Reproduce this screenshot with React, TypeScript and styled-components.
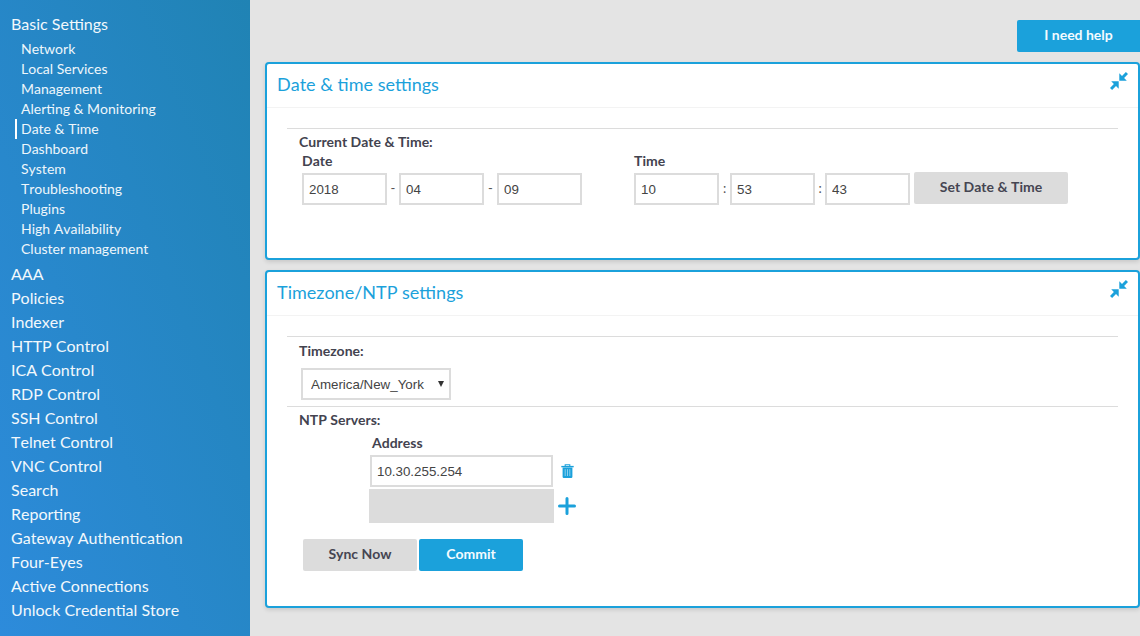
import React from "react";
import styled, { createGlobalStyle } from "styled-components";

const Global = createGlobalStyle`
  html, body { margin: 0; padding: 0; height: 100%; }
  body { font-family: Lato, "Open Sans", sans-serif; background: #e4e4e4; overflow: hidden; font-kerning: none; }
  * { box-sizing: border-box; }
`;

const Page = styled.div`
  display: flex;
  width: 1140px;
  height: 636px;
`;

const Sidebar = styled.nav`
  width: 250px;
  flex: none;
  padding-top: 12px;
  background: linear-gradient(to bottom left, #2083b4, #2d8bdb);
  color: #fff;
`;

const Head = styled.div`
  height: 24px;
  line-height: 24px;
  padding-left: 11px;
  font-size: 16px;
  color: #f2f8fc;
`;

const SubList = styled.div`
  margin: 3px 0 3px;
`;

const SubItem = styled.div<{ $active?: boolean }>`
  position: relative;
  height: 20px;
  line-height: 20px;
  margin-left: 15px;
  padding-left: ${(p) => (p.$active ? "4px" : "6px")};
  font-size: 14px;
  color: #eef6fb;
  border-left: ${(p) => (p.$active ? "2px solid #fff" : "none")};
`;

const Main = styled.main`
  flex: 1;
  padding: 20px 0 0 15px;
  display: flex;
  flex-direction: column;
`;

const TopBar = styled.div`
  display: flex;
  justify-content: flex-end;
  margin-bottom: 10px;
`;

const Button = styled.button<{ $w: number; $primary?: boolean }>`
  width: ${(p) => p.$w}px;
  height: 32px;
  flex: none;
  border: 0;
  border-radius: 2px;
  padding: 0 0 4px;
  font: 700 14px Lato, sans-serif;
  font-kerning: none;
  background: ${(p) => (p.$primary ? "#1ba1db" : "#dcdcdc")};
  color: ${(p) => (p.$primary ? "#f4fbff" : "#454552")};
`;

const HelpButton = styled(Button)`
  border-radius: 2px 0 0 2px;
`;

const Card = styled.section<{ $h: number }>`
  height: ${(p) => p.$h}px;
  margin-bottom: 10px;
  border: 2px solid #1ba1db;
  border-radius: 4px;
  background: #fff;
  box-shadow: 0 2px 4px rgba(0, 0, 0, 0.12);
`;

const CardHead = styled.header`
  height: 44px;
  display: flex;
  align-items: flex-start;
  justify-content: space-between;
  padding: 6px 10px 0;
  border-bottom: 1px solid #f3f3f3;
`;

const Title = styled.h2`
  margin: 0;
  height: 28px;
  line-height: 28px;
  font-size: 18px;
  font-weight: 400;
  color: #1ba1db;
`;

const CardBody = styled.div`
  padding: 20px 20px 0;
`;

const Rule = styled.hr`
  margin: 0;
  border: 0;
  border-top: 1px solid #dcdcdc;
`;

const Label = styled.div<{ $indent: number; $mb?: number; $mt?: number }>`
  height: 20px;
  line-height: 20px;
  padding-left: ${(p) => p.$indent}px;
  margin-top: ${(p) => p.$mt ?? 0}px;
  margin-bottom: ${(p) => p.$mb ?? 0}px;
  font-size: 14px;
  font-weight: 700;
  color: #43434f;
`;

const DateRow = styled.div`
  display: flex;
  padding-left: 15px;
  margin-top: -1px;
`;

const FieldGroup = styled.div<{ $w: number }>`
  width: ${(p) => p.$w}px;
  flex: none;
`;

const Fields = styled.div`
  display: flex;
  align-items: center;
`;

const Input = styled.input<{ $w: number }>`
  width: ${(p) => p.$w}px;
  height: 32px;
  flex: none;
  border: 2px solid #dcdcdc;
  border-radius: 0;
  background: #fff;
  padding: 0 5px;
  outline: none;
  font: 13.33px "Liberation Sans", Arial, sans-serif;
  color: #444;
`;

const Sep = styled.span<{ $w: number }>`
  width: ${(p) => p.$w}px;
  flex: none;
  text-align: center;
  font: 13px Lato, sans-serif;
  color: #555;
  position: relative;
  top: -1px;
`;

const SetButton = styled(Button)`
  align-self: flex-start;
  margin: -1px 0 0 4px;
`;

const SelectWrap = styled.div`
  position: relative;
  width: 150px;
  margin: 7px 0 6px 14px;
  &::after {
    content: "";
    position: absolute;
    right: 7px;
    top: 13px;
    border-left: 3px solid transparent;
    border-right: 3px solid transparent;
    border-top: 6px solid #333;
  }
`;

const Select = styled.select`
  display: block;
  width: 150px;
  height: 32px;
  appearance: none;
  border: 2px solid #dcdcdc;
  border-radius: 0;
  background: #fff;
  padding-left: 8px;
  outline: none;
  font: 13.33px "Liberation Sans", Arial, sans-serif;
  color: #444;
`;

const NtpRow = styled.div<{ $mt?: number }>`
  display: flex;
  align-items: center;
  margin-left: 82px;
  margin-top: ${(p) => p.$mt ?? 0}px;
`;

const AddressInput = styled(Input)`
  margin-left: 1px;
`;

const Blank = styled.div`
  width: 185px;
  height: 34px;
  flex: none;
  background: #dcdcdc;
`;

const TrashBtn = styled.span`
  display: flex;
  margin-left: 7.5px;
`;

const PlusBtn = styled.span`
  display: flex;
  margin-left: 3px;
`;

const Actions = styled.div`
  display: flex;
  gap: 2px;
  margin: 16px 0 0 16px;
`;

const IconWrap = styled.span`
  display: flex;
  margin-top: 2px;
`;

const CompressIcon = () => (
  <IconWrap>
    <svg width="18" height="18" viewBox="0 0 18 18" fill="#1ba1db">
      <path d="M9.3 1.2v7.5h7.5l-2.7-2.7L18 2.1 15.9 0 12 3.9z" />
      <path d="M8.7 16.8V9.3H1.2l2.7 2.7L0 15.9 2.1 18 6 14.1z" />
    </svg>
  </IconWrap>
);

const TrashIcon = () => (
  <svg width="13" height="14" viewBox="0 0 13 14" fill="none">
    <path d="M4.2 2.2V.7h4.6v1.5" stroke="#1ba1db" strokeWidth="1.1" />
    <path d="M.3 2.6h12.4" stroke="#1ba1db" strokeWidth="1.4" />
    <path d="M1.6 3.4h9.8v9.3a1.2 1.2 0 0 1-1.2 1.2H2.8a1.2 1.2 0 0 1-1.2-1.2z" fill="#1ba1db" />
    <path d="M4.2 5.2v6.8M6.5 5.2v6.8M8.8 5.2v6.8" stroke="#fff" strokeOpacity=".55" strokeWidth=".9" />
  </svg>
);

const PlusIcon = () => (
  <svg width="20" height="20" viewBox="0 0 20 20" fill="none">
    <path d="M10 2.5v15M2.5 10h15" stroke="#1ba1db" strokeWidth="3" strokeLinecap="round" />
  </svg>
);

const menu = ["AAA", "Policies", "Indexer", "HTTP Control", "ICA Control", "RDP Control", "SSH Control", "Telnet Control", "VNC Control", "Search", "Reporting", "Gateway Authentication", "Four-Eyes", "Active Connections", "Unlock Credential Store"];
const sub = ["Network", "Local Services", "Management", "Alerting & Monitoring", "Date & Time", "Dashboard", "System", "Troubleshooting", "Plugins", "High Availability", "Cluster management"];

export default function App() {
  return (
    <Page>
      <Global />
      <Sidebar>
        <Head>Basic Settings</Head>
        <SubList>
          {sub.map((s) => (
            <SubItem key={s} $active={s === "Date & Time"}>{s}</SubItem>
          ))}
        </SubList>
        {menu.map((m) => (
          <Head key={m}>{m}</Head>
        ))}
      </Sidebar>
      <Main>
        <TopBar>
          <HelpButton $w={123} $primary>I need help</HelpButton>
        </TopBar>
        <Card $h={198}>
          <CardHead>
            <Title>Date &amp; time settings</Title>
            <CompressIcon />
          </CardHead>
          <CardBody>
            <Rule />
            <Label $indent={12} $mt={3}>Current Date &amp; Time:</Label>
            <DateRow>
              <FieldGroup $w={332}>
                <Label $indent={0} $mb={2}>Date</Label>
                <Fields>
                  <Input $w={85} readOnly value="2018" />
                  <Sep $w={12}>-</Sep>
                  <Input $w={85} readOnly value="04" />
                  <Sep $w={13}>-</Sep>
                  <Input $w={85} readOnly value="09" />
                </Fields>
              </FieldGroup>
              <FieldGroup $w={440}>
                <Label $indent={0} $mb={2}>Time</Label>
                <Fields>
                  <Input $w={85} readOnly value="10" />
                  <Sep $w={11}>:</Sep>
                  <Input $w={85} readOnly value="53" />
                  <Sep $w={10}>:</Sep>
                  <Input $w={85} readOnly value="43" />
                  <SetButton $w={154}>Set Date &amp; Time</SetButton>
                </Fields>
              </FieldGroup>
            </DateRow>
          </CardBody>
        </Card>
        <Card $h={338}>
          <CardHead>
            <Title>Timezone/NTP settings</Title>
            <CompressIcon />
          </CardHead>
          <CardBody>
            <Rule />
            <Label $indent={12} $mt={4}>Timezone:</Label>
            <SelectWrap>
              <Select defaultValue="America/New_York">
                <option>America/New_York</option>
              </Select>
            </SelectWrap>
            <Rule />
            <Label $indent={12} $mt={3} $mb={3}>NTP Servers:</Label>
            <Label $indent={85} $mb={2}>Address</Label>
            <NtpRow>
              <AddressInput $w={183} readOnly value="10.30.255.254" />
              <TrashBtn><TrashIcon /></TrashBtn>
            </NtpRow>
            <NtpRow $mt={2}>
              <Blank />
              <PlusBtn><PlusIcon /></PlusBtn>
            </NtpRow>
            <Actions>
              <Button $w={114}>Sync Now</Button>
              <Button $w={104} $primary>Commit</Button>
            </Actions>
          </CardBody>
        </Card>
      </Main>
    </Page>
  );
}
